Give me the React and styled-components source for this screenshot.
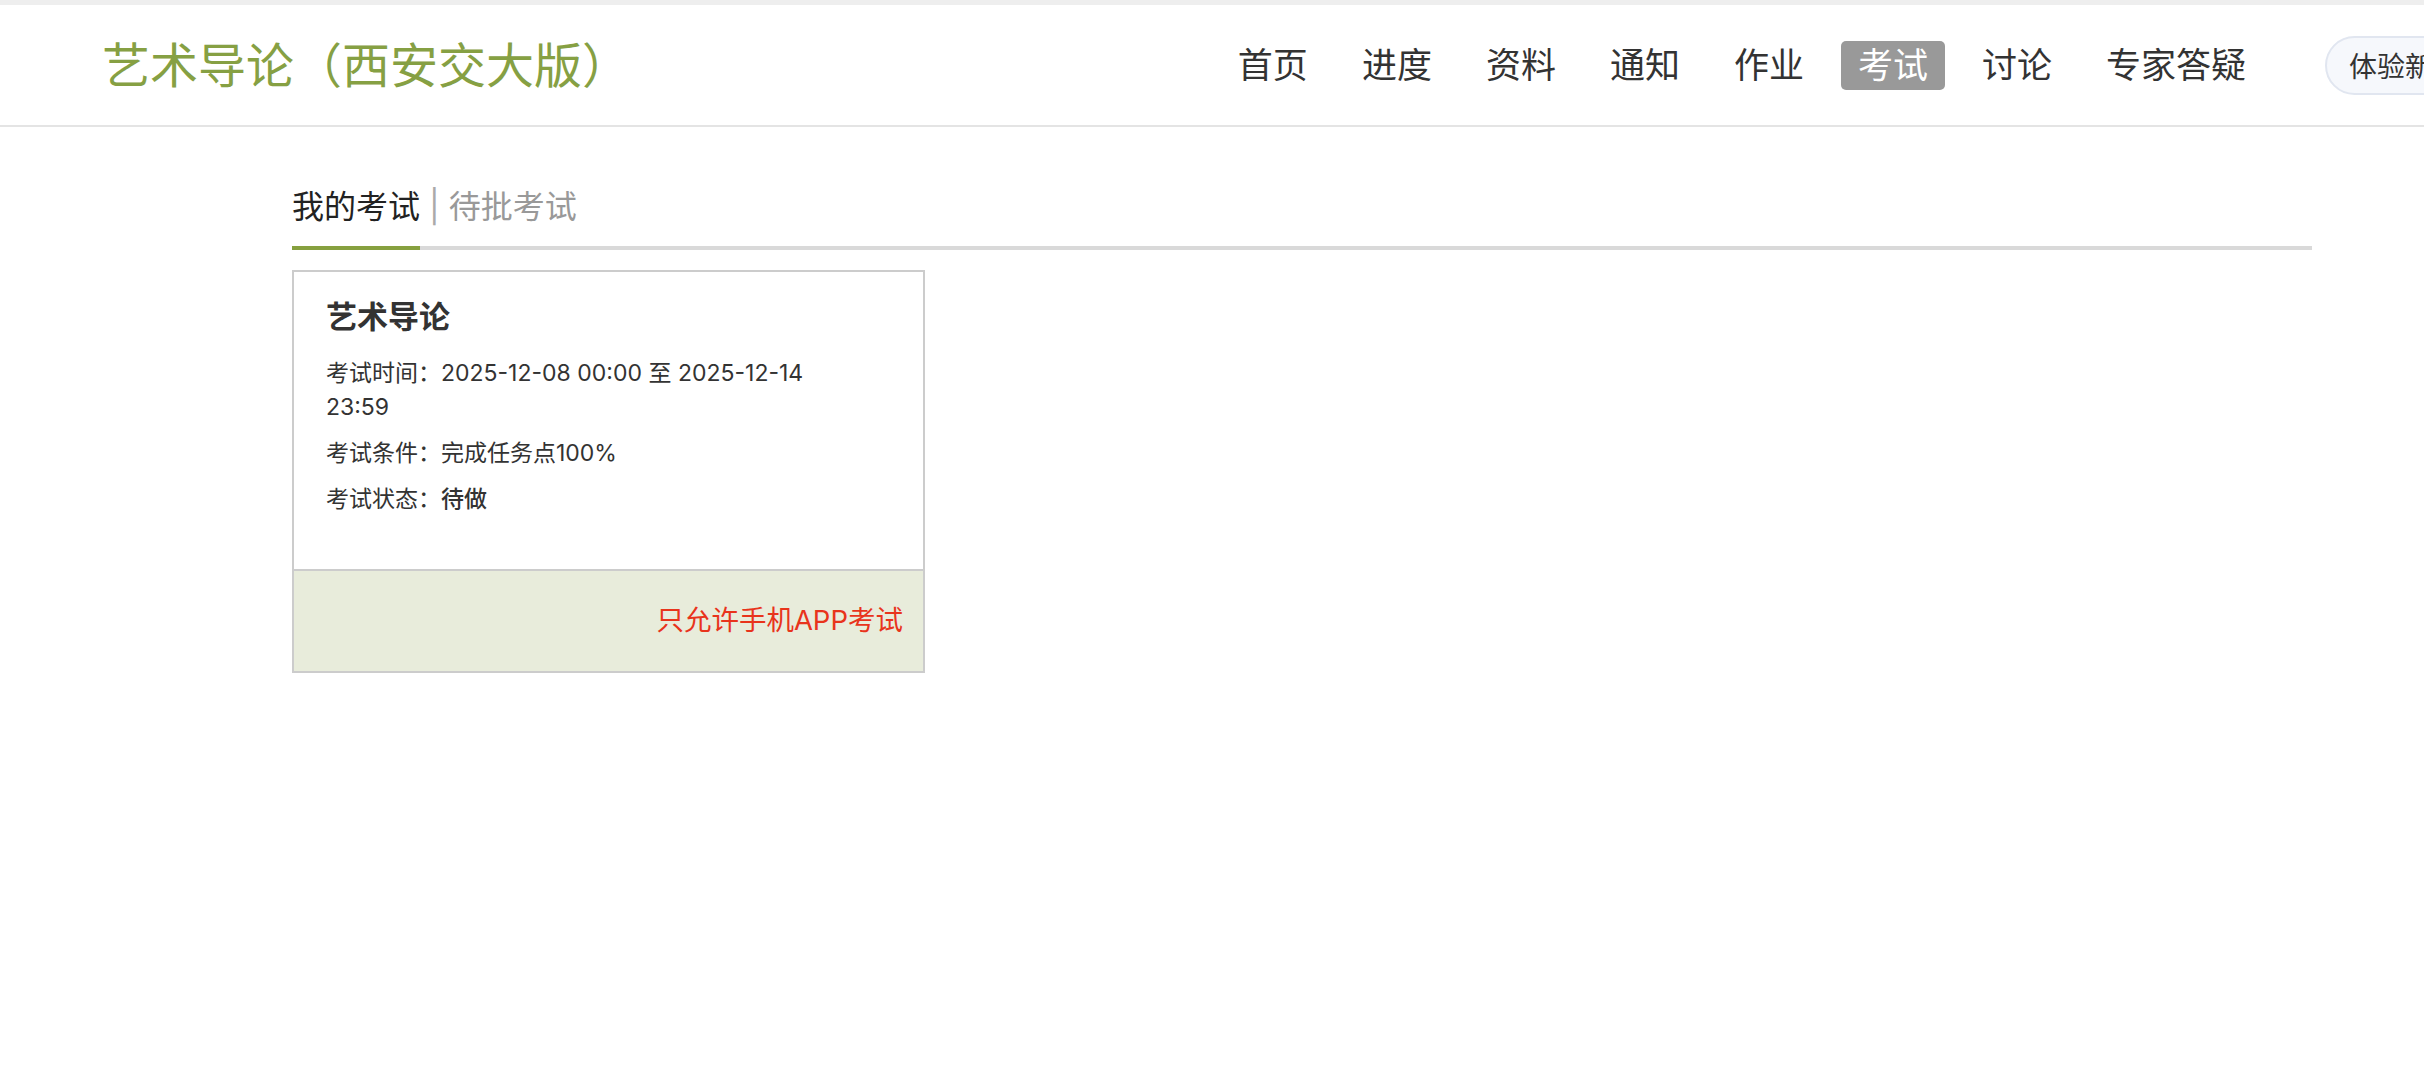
import styled, { createGlobalStyle } from 'styled-components';

const GlobalStyle = createGlobalStyle`
  html, body {
    margin: 0;
    padding: 0;
    background: #fff;
    overflow-x: hidden;
  }
  body {
    font-family: Inter, "Noto Sans CJK SC", sans-serif;
    color: #333;
  }
`;

const TopStrip = styled.div`
  height: 5px;
  background-color: #eeeeee;
`;

const Header = styled.header`
  height: 120px;
  border-bottom: 2px solid #e4e4e4;
  overflow: hidden;
`;

const HeaderInner = styled.div`
  width: 2560px;
  height: 100%;
  box-sizing: border-box;
  padding: 0 75px 0 102px;
  display: flex;
  align-items: center;
`;

const CourseTitle = styled.h1`
  margin: 0 0 6px;
  font-size: 48px;
  font-weight: 400;
  color: #86a043;
  white-space: nowrap;
`;

const Nav = styled.nav`
  margin-left: auto;
  display: flex;
  align-items: center;
  gap: 20px;
`;

const NavItem = styled.a`
  display: block;
  height: 49px;
  line-height: 49px;
  padding: 0 17px;
  font-size: 35px;
  color: ${(p) => (p.$active ? '#fff' : '#333')};
  background-color: ${(p) => (p.$active ? '#999' : 'transparent')};
  border-radius: 5px;
  white-space: nowrap;
  cursor: pointer;
`;

const NewVersionButton = styled.button`
  margin-left: 42px;
  height: 59px;
  padding: 0 22px;
  border: 2px solid #e1e6f0;
  border-radius: 30px;
  background-color: #f6f8fc;
  font-family: inherit;
  font-size: 28px;
  color: #333;
  white-space: nowrap;
`;

const Main = styled.main`
  width: 2020px;
  margin-left: 292px;
  padding-top: 58px;
`;

const TabBar = styled.div`
  display: flex;
  align-items: flex-end;
  border-bottom: 4px solid #d9d9d9;
`;

const Tab = styled.span`
  font-size: 32px;
  line-height: 44px;
  padding-bottom: 17px;
  color: ${(p) => (p.$active ? '#222' : '#999')};
  border-bottom: 4px solid ${(p) => (p.$active ? '#86a03f' : 'transparent')};
  margin-bottom: -4px;
  white-space: nowrap;
  cursor: pointer;
`;

const TabDivider = styled.span`
  font-size: 32px;
  line-height: 44px;
  padding-bottom: 17px;
  margin: 0 9px;
  color: #aaa;
`;

const ExamList = styled.div`
  display: flex;
  flex-wrap: wrap;
  gap: 24px;
  margin-top: 20px;
`;

const ExamCard = styled.div`
  width: 633px;
  box-sizing: border-box;
  border: 2px solid #cccccc;
`;

const CardBody = styled.div`
  padding: 23px 32px 53px;
`;

const CardTitle = styled.h3`
  margin: 0 0 17px;
  font-size: 31px;
  line-height: 44px;
  font-weight: 700;
  color: #333;
`;

const InfoLine = styled.p`
  margin: 0 0 12px;
  font-size: 23px;
  line-height: 34px;
  color: #333;
  max-width: 520px;

  &:last-child {
    margin-bottom: 0;
  }
`;

const StatusText = styled.span`
  font-weight: 500;
`;

const CardFooter = styled.div`
  height: 100px;
  border-top: 2px solid #cccccc;
  background-color: #e8ecdb;
  display: flex;
  align-items: center;
  justify-content: flex-end;
  padding-right: 20px;
`;

const AppOnlyNotice = styled.span`
  font-size: 27.5px;
  color: #e8341c;
  margin-bottom: 6px;
`;

const navItems = ['首页', '进度', '资料', '通知', '作业', '考试', '讨论', '专家答疑'];

const exams = [
  {
    title: '艺术导论',
    time: '2025-12-08 00:00 至 2025-12-14 23:59',
    condition: '完成任务点100%',
    status: '待做',
    notice: '只允许手机APP考试',
  },
];

function App() {
  return (
    <>
      <GlobalStyle />
      <TopStrip />
      <Header>
        <HeaderInner>
          <CourseTitle>艺术导论（西安交大版）</CourseTitle>
          <Nav>
            {navItems.map((item) => (
              <NavItem key={item} $active={item === '考试'}>{item}</NavItem>
            ))}
            <NewVersionButton type="button">体验新版</NewVersionButton>
          </Nav>
        </HeaderInner>
      </Header>
      <Main>
        <TabBar>
          <Tab $active>我的考试</Tab>
          <TabDivider>|</TabDivider>
          <Tab>待批考试</Tab>
        </TabBar>
        <ExamList>
          {exams.map((exam) => (
            <ExamCard key={exam.title}>
              <CardBody>
                <CardTitle>{exam.title}</CardTitle>
                <InfoLine>考试时间：{exam.time}</InfoLine>
                <InfoLine>考试条件：{exam.condition}</InfoLine>
                <InfoLine>考试状态：<StatusText>{exam.status}</StatusText></InfoLine>
              </CardBody>
              <CardFooter>
                <AppOnlyNotice>{exam.notice}</AppOnlyNotice>
              </CardFooter>
            </ExamCard>
          ))}
        </ExamList>
      </Main>
    </>
  );
}

export default App;
